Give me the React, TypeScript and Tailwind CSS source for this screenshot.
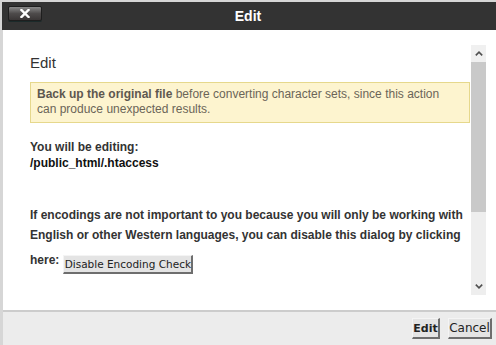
import React from 'react';

const arial = { fontFamily: '"Liberation Sans", Arial, sans-serif' };
const tahoma = { fontFamily: '"DejaVu Sans", Tahoma, Verdana, sans-serif' };

const ClassicButton: React.FC<{ label: string; bold?: boolean; className?: string }> = ({
  label,
  bold = false,
  className = ''
}) => (
  <button
    type="button"
    style={tahoma}
    className={`bg-[#e4e4e4] text-[#222] leading-none whitespace-nowrap border border-t-[#f4f4f4] border-l-[#f4f4f4] border-r-2 border-b-2 border-r-[#6e6e6e] border-b-[#6e6e6e] ${bold ? 'font-bold' : 'font-normal'} ${className}`}
  >
    {label}
  </button>
);

const Caret: React.FC<{ down?: boolean }> = ({ down = false }) => (
  <svg width="8" height="5" viewBox="0 0 8 5" className={down ? 'rotate-180' : ''}>
    <path d="M0.8 4.4 L4 1.2 L7.2 4.4" fill="none" stroke="#505050" strokeWidth="1.6" />
  </svg>
);

export default function App() {
  return (
    <div className="w-[496px] h-[345px] bg-[#d6d6d6] pt-[2px] pl-[2px] flex flex-col overflow-hidden" style={arial}>
      {/* title bar */}
      <div className="h-[28px] bg-[#333333] grid grid-cols-[1fr_auto_1fr] items-center">
        <div className="pl-[6px] pb-[5px]">
          <div className="w-[34px] h-[15px] rounded-[2px] border border-[#1e1e1e] bg-gradient-to-b from-[#8a8a8a] via-[#4e4b4b] to-[#3a3636] flex items-center justify-center shadow-[0_1px_0_#1b2a2a]">
            <svg width="10" height="9" viewBox="0 0 10 9">
              <path d="M1.5 1 L8.5 8 M8.5 1 L1.5 8" stroke="#ffffff" strokeWidth="2.4" strokeLinecap="square" />
            </svg>
          </div>
        </div>
        <div className="text-white font-bold text-[14px] pr-[2px]">Edit</div>
        <div />
      </div>

      {/* body */}
      <div className="flex-1 bg-white ml-[1px] flex">
        <div className="w-[440px] ml-[27px] pt-[24px] text-[12px]">
          <div className="text-[15px] leading-[18px] text-[#333]">Edit</div>
          <div className="mt-[10px] h-[41px] bg-[#fdf4cf] border border-[#e6d88c] pl-[6px] pr-[26px] pt-[4px] text-[#6b6558] leading-[15px]">
            <b className="text-[#5d5850]">Back up the original file</b> before converting character sets, since this action can produce unexpected results.
          </div>
          <div className="mt-[16px] font-bold text-[#333] leading-[16px]">You will be editing:</div>
          <div className="font-bold text-[#111] leading-[16px]">/public_html/.htaccess</div>
          <div className="mt-[34px] font-bold text-[#333] leading-[20px]">
            If encodings are not important to you because you will only be working with English or other Western languages, you can disable this dialog by clicking
          </div>
          <div className="mt-[7px] flex items-start gap-[4px] font-bold text-[#333] leading-[16px]">
            <span>here:</span>
            <ClassicButton label="Disable Encoding Check" className="mt-[3px] h-[19px] w-[130px] px-0 text-[10.5px]" />
          </div>
        </div>

        {/* scrollbar */}
        <div className="ml-[1px] mt-[15px] w-[15px] h-[250px] flex flex-col bg-[#eeeeee]">
          <div className="h-[17px] bg-[#f0f0f0] flex items-center justify-center"><Caret /></div>
          <div className="h-[150px] bg-[#c9c9c9]" />
          <div className="flex-1" />
          <div className="h-[17px] flex items-center justify-center"><Caret down /></div>
        </div>
      </div>

      {/* footer */}
      <div className="h-[35px] bg-[#ececec] border-t-2 border-[#cccccc] ml-[1px] flex items-start justify-end gap-[8px] pr-[4px] pt-[6px]">
        <ClassicButton label="Edit" bold className="h-[21px] w-[28px] text-[11px]" />
        <ClassicButton label="Cancel" className="h-[21px] w-[44px] text-[12px]" />
      </div>
    </div>
  );
}
